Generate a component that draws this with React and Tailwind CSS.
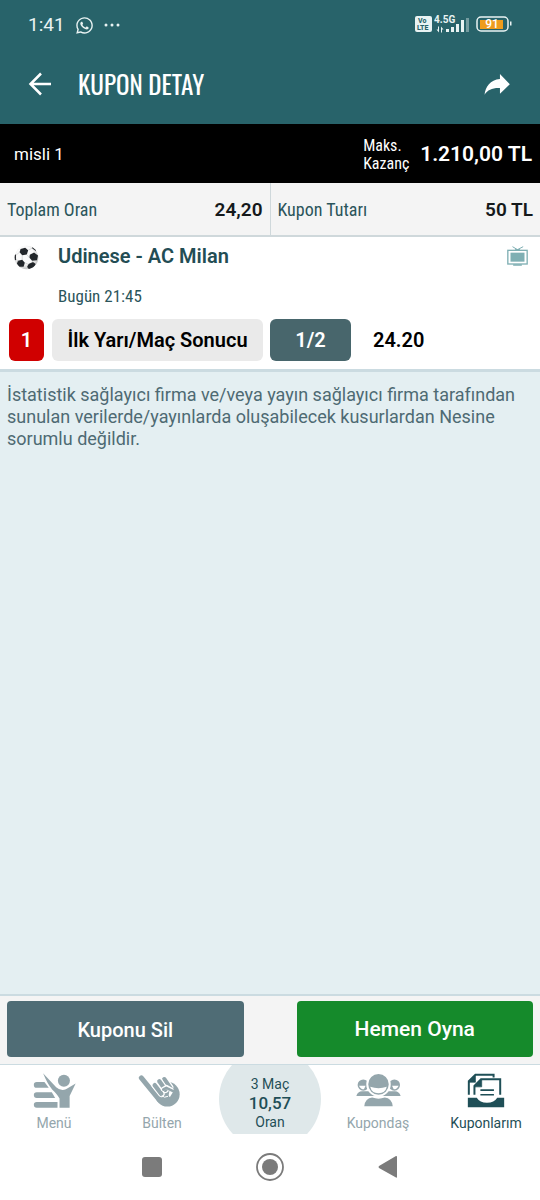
import { FaWhatsapp } from 'react-icons/fa'

const roboto = 'font-[Roboto,sans-serif]'
const condensed = "font-['Roboto_Condensed','Liberation_Sans_Narrow',Roboto,sans-serif]"
const oswald = "font-['Oswald','Roboto_Condensed',Roboto,sans-serif]"

// ─── Status bar ─────────────────────────────────────────
function SignalIcon() {
  return (
    <svg viewBox="0 0 36 18" className="h-[18px] w-9" fill="#e9f3f3">
      <text x="0" y="8" fontSize="10" fontWeight="700" fontFamily="Roboto, sans-serif">4.5G</text>
      <path d="M4 11.500v3H2.500L5 17.500v-6zM7 17.500v-6l2.500 3H8v3z" />
      <rect x="12" y="14" width="3" height="3" />
      <rect x="17" y="12" width="3" height="5" />
      <rect x="22" y="9" width="3" height="8" />
      <rect x="27" y="5" width="3" height="12" />
      <rect x="32" y="3" width="3" height="14" opacity="0.4" />
    </svg>
  )
}

function VolteIcon() {
  return (
    <svg viewBox="0 0 17 16" className="h-4 w-[17px]">
      <rect width="17" height="16" rx="2" fill="#e9f3f3" />
      <g fill="#28636a" fontSize="7" fontWeight="800" fontFamily="Roboto, sans-serif">
        <text x="3" y="7">Vo</text>
        <text x="2" y="14">LTE</text>
      </g>
    </svg>
  )
}

function BatteryIcon() {
  return (
    <svg viewBox="0 0 36 16" className="h-4 w-9">
      <rect x="1" y="1" width="31" height="14" rx="4" fill="none" stroke="#e9f3f3" strokeWidth="1.500" />
      <rect x="4" y="4" width="23" height="9" fill="#ee9c1c" />
      <path d="M34 5.500h1.500v4H34z" fill="#e9f3f3" />
      <text x="16" y="12" textAnchor="middle" fontSize="12" fontWeight="500" fill="#fff" fontFamily="Roboto, sans-serif">91</text>
    </svg>
  )
}

function StatusBar() {
  return (
    <div className="flex h-[50px] items-center justify-between pl-7 pr-7 text-[#e9f3f3]">
      <div className="flex items-center gap-2.5">
        <span className="text-[19px]">1:41</span>
        <FaWhatsapp className="size-[19px]" />
        <svg viewBox="0 0 16 4" className="h-1 w-4" fill="currentColor">
          <circle cx="2" cy="2" r="1.500" />
          <circle cx="8" cy="2" r="1.500" />
          <circle cx="14" cy="2" r="1.500" />
        </svg>
      </div>
      <div className="flex items-center pb-0.5">
        <VolteIcon />
        <span className="pl-0.5 pr-1.5"><SignalIcon /></span>
        <BatteryIcon />
      </div>
    </div>
  )
}

// ─── Icons ──────────────────────────────────────────────
function BackIcon() {
  return (
    <svg viewBox="0 0 24 24" className="size-6" fill="none" stroke="#fff" strokeWidth="2.500">
      <path d="M23 12H3M13 1.500L2.500 12L13 22.500" />
    </svg>
  )
}

function ShareIcon() {
  return (
    <svg viewBox="0 0 78 64" className="h-[21px] w-[26px]" fill="#fff">
      <path d="M48 0L78 31L48 60V43C24 42 11 49 1 63C4 38 18 18 48 15z" />
    </svg>
  )
}

function BallIcon() {
  return (
    <svg viewBox="0 0 76 76" className="size-[25px]">
      <defs>
        <clipPath id="ball"><circle cx="38" cy="38" r="36" /></clipPath>
        <radialGradient id="shade" cx="0.45" cy="0.4" r="0.6">
          <stop offset="0.600" stopColor="#fafafa" />
          <stop offset="1" stopColor="#c4c4c4" />
        </radialGradient>
      </defs>
      <circle cx="38" cy="38" r="36" fill="url(#shade)" />
      <g clipPath="url(#ball)" fill="#22262a">
        <path d="M20 12l14-4 9 8-4 13-14 2-8-9z" />
        <path d="M48 30l13-7 12 9-3 14-15 2-8-9z" />
        <path d="M12 48l13-3 8 9-4 12-13 0-7-9z" />
        <path d="M44 58l14-6 8 6-6 12-14 4-6-7z" />
        <path d="M0 26l6 4 0 14-6 6z" />
        <path d="M56 3l14 12-3 4-12-9z" />
      </g>
      <path d="M39 29l8 10M17 22L6 31M43 16l13-7M55 48l3 5M6 43l7 6M25 31l0 14M33 54l11 5" stroke="#b5b8ba" strokeWidth="1.500" fill="none" />
    </svg>
  )
}

function TvIcon() {
  return (
    <svg viewBox="0 0 62 60" className="h-5 w-[21px]" fill="#7fafb3">
      <path d="M16 2l15 9 17-9" fill="none" stroke="#7fafb3" strokeWidth="3" />
      <rect x="2" y="13" width="58" height="41" fill="#fff" stroke="#7fafb3" strokeWidth="4" />
      <rect x="10" y="20" width="42" height="27" />
      <path d="M24 9h14v4H24zM18 55h26v4H18z" />
    </svg>
  )
}

function MenuIcon() {
  return (
    <svg viewBox="100 264 128 104" className="h-[35px] w-[43px]" fill="currentColor">
      <path d="M111 291H134L147 308H111A8.500 8.500 0 0 1 111 291z" />
      <path d="M111 321H156L166 338H111A8.500 8.500 0 0 1 111 321z" />
      <path d="M111 350H173V367H111A8.500 8.500 0 0 1 111 350z" />
      <circle cx="192" cy="287" r="18" />
      <path d="M130 265L169 306Q184 319 198 312L227 295L209 332V367H179V340Q173 328 157 313Q143 297 130 265z" />
    </svg>
  )
}

function HandIcon() {
  return (
    <svg viewBox="412 266 147 104" className="h-[35px] w-[49px]" fill="none" strokeLinecap="round" strokeLinejoin="round">
      <circle cx="500" cy="329" r="37" fill="currentColor" />
      <path d="M422 280L476 346" stroke="currentColor" strokeWidth="15" />
      <path d="M491 284L508 308" stroke="#fff" strokeWidth="20" />
      <path d="M491 284L510 312" stroke="currentColor" strokeWidth="13" />
      <path d="M476 290L494 316" stroke="#fff" strokeWidth="20" />
      <path d="M476 290L494 316" stroke="currentColor" strokeWidth="13" />
      <path d="M462 302L482 328" stroke="#fff" strokeWidth="20" />
      <path d="M462 302L482 328" stroke="currentColor" strokeWidth="13" />
      <path d="M486 314L497 307L513 316L510 332" stroke="#fff" strokeWidth="12" />
      <path d="M488 315L497 310L522 322L512 338" stroke="currentColor" strokeWidth="8" />
      <path d="M484 334Q490 342 501 336" stroke="#fff" strokeWidth="3" />
    </svg>
  )
}

function PeopleIcon() {
  return (
    <svg viewBox="256 266 136 102" className="h-[34px] w-[45px]" fill="currentColor">
      <g>
        <circle cx="278" cy="302" r="17" />
        <circle cx="372" cy="302" r="17" />
        <path d="M257 335Q262 320 276 321H374Q386 321 391 335z" />
        <path d="M265 304Q270 315 280 315L285 304zM385 304Q380 315 370 315L365 304z" fill="#fff" />
      </g>
      <circle cx="324" cy="300" r="34" stroke="#fff" strokeWidth="6" />
      <path d="M299 307Q324 316 349 307Q345 326 324 327Q303 326 299 307z" fill="#fff" />
      <path d="M281 366Q284 342 305 340Q324 347 343 340Q364 342 367 366z" />
    </svg>
  )
}

function CouponsIcon() {
  return (
    <svg viewBox="590 262 114 106" className="h-[35px] w-[38px]" fill="none" stroke="currentColor" strokeWidth="6">
      <path d="M595 328V287L615 267H670V276" />
      <path d="M612 328V301L632 281H690V328" />
      <path d="M595 290L615 267V290zM612 304L634 281V304z" fill="currentColor" strokeWidth="2" />
      <path d="M630 314H671M630 328H671" strokeWidth="5" />
      <path d="M592 337H619Q628 352 650 352Q672 352 681 337H702V366H592z" fill="currentColor" stroke="none" />
    </svg>
  )
}

// ─── Bottom tab ─────────────────────────────────────────
function Tab({ icon, label, active }) {
  return (
    <a
      href="#"
      aria-current={active ? 'page' : undefined}
      className={`flex flex-1 flex-col items-center pt-[7px] ${active ? 'text-[#1f4f57]' : 'text-[#94a6ac]'}`}
    >
      <span className="flex h-9 items-center">{icon}</span>
      <span className="mt-[5px] text-sm leading-5">{label}</span>
    </a>
  )
}

export default function App() {
  return (
    <div className={`flex min-h-screen flex-col bg-[#e4eff2] ${roboto}`}>

      {/* Header */}
      <header className="bg-[#28636a]">
        <StatusBar />
        <div className="flex h-[74px] items-center pb-1.5 pl-7 pr-[30px]">
          <button aria-label="Geri"><BackIcon /></button>
          <h1 className={`ml-[26px] flex-1 text-[25px] leading-8 text-white ${oswald}`}>KUPON DETAY</h1>
          <button aria-label="Paylaş"><ShareIcon /></button>
        </div>
      </header>

      {/* Max win */}
      <div className="flex h-[59px] items-center bg-black pl-3.5 pr-2 pt-0.5 text-white">
        <span className="flex-1 text-[17px]">misli 1</span>
        <span className={`mr-3 w-[45px] text-base leading-[18px] ${condensed}`}>Maks. Kazanç</span>
        <span className="text-[21px] font-semibold">1.210,00 TL</span>
      </div>

      {/* Totals */}
      <dl className="flex h-[54px] border-b-2 border-[#cfd8db] bg-[#f4f4f4]">
        <div className="flex flex-1 items-center justify-between border-r border-[#cfd8db] px-[7px] pt-0.5">
          <dt className={`text-lg text-[#2b555b] ${condensed}`}>Toplam Oran</dt>
          <dd className="text-[19px] font-semibold text-[#15191b]">24,20</dd>
        </div>
        <div className="flex flex-1 items-center justify-between px-[7px] pt-0.5">
          <dt className={`text-lg text-[#2b555b] ${condensed}`}>Kupon Tutarı</dt>
          <dd className="text-[19px] font-semibold text-[#15191b]">50 TL</dd>
        </div>
      </dl>

      {/* Match */}
      <section className="border-b-[3px] border-[#cbdbe1] bg-white pb-2 pl-[9px] pr-3 pt-[7px]">
        <div className="flex">
          <span className="w-[49px] pl-[5px] pt-px"><BallIcon /></span>
          <div className="flex-1">
            <h2 className="text-xl font-semibold leading-6 text-[#234d54]">Udinese - AC Milan</h2>
            <p className={`mt-4 text-[17px] leading-6 text-[#2b555b] ${condensed}`}>Bugün 21:45</p>
          </div>
          <span className="pt-0.5"><TvIcon /></span>
        </div>
        <div className="mt-[11px] flex h-[42px] items-stretch text-xl font-semibold text-black">
          <span className="flex w-[35px] items-center justify-center rounded-md bg-[#d00000] text-white">1</span>
          <span className="ml-2 flex w-[211px] items-center justify-center rounded-md bg-[#eaeaea]">İlk Yarı/Maç Sonucu</span>
          <span className="ml-[7px] flex w-[81px] items-center justify-center rounded-md bg-[#48666c] text-white">1/2</span>
          <span className="ml-[22px] flex items-center">24.20</span>
        </div>
      </section>

      {/* Disclaimer */}
      <main className="flex-1 px-[7px] pt-3">
        <p className="text-lg leading-[22px] text-[#4e6a73]">
          İstatistik sağlayıcı firma ve/veya yayın sağlayıcı firma tarafından sunulan verilerde/yayınlarda oluşabilecek kusurlardan Nesine sorumlu değildir.
        </p>
      </main>

      {/* Actions */}
      <div className="flex justify-between gap-[53px] border-t-2 border-[#cbdbe1] bg-[#f4f4f4] px-[7px] pb-[7px] pt-[5px] text-xl font-medium text-white">
        <button className="h-14 flex-1 rounded-sm bg-[#4f6c75] pt-0.5">Kuponu Sil</button>
        <button className="h-14 flex-1 rounded-sm bg-[#158a2b] pt-0.5 text-[21px]">Hemen Oyna</button>
      </div>

      {/* Tabs */}
      <nav className="flex h-[70px] border-t border-[#cbdbe1] bg-white">
        <Tab icon={<MenuIcon />} label="Menü" />
        <Tab icon={<HandIcon />} label="Bülten" />
        <a href="#" className="relative flex flex-1 flex-col items-center overflow-hidden pt-[9px] text-sm leading-5 text-[#1f4f57]">
          <span className="absolute -top-[17px] left-1/2 size-[102px] -translate-x-1/2 rounded-full bg-[#dfe8ea]" />
          <span className="relative">3 Maç</span>
          <span className="relative text-[17px] font-medium leading-[18px]">10,57</span>
          <span className="relative">Oran</span>
        </a>
        <Tab icon={<PeopleIcon />} label="Kupondaş" />
        <Tab icon={<CouponsIcon />} label="Kuponlarım" active />
      </nav>

      {/* System navigation */}
      <div className="flex h-[66px] items-center justify-center gap-[89px] bg-white text-[#7b7b7b]">
        <button aria-label="Son uygulamalar">
          <svg viewBox="0 0 28 28" className="size-7" fill="currentColor"><rect x="3" y="4" width="20" height="20" rx="3" /></svg>
        </button>
        <button aria-label="Ana ekran">
          <svg viewBox="0 0 28 28" className="size-7" fill="currentColor">
            <circle cx="14" cy="14" r="13" fill="none" stroke="currentColor" strokeWidth="1.800" />
            <circle cx="14" cy="14" r="8" />
          </svg>
        </button>
        <button aria-label="Geri dön">
          <svg viewBox="0 0 28 28" className="size-7" fill="currentColor"><path d="M24 3v21q0 1-1 .5L6 15q-1-1 0-2L23 3q1-.3 1 1z" /></svg>
        </button>
      </div>
    </div>
  )
}
